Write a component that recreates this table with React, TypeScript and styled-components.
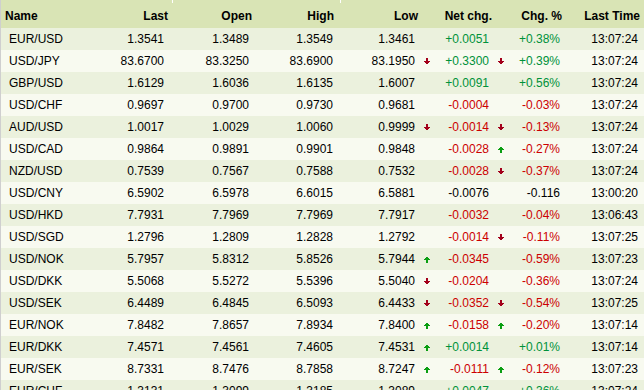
import React from "react";
import styled, { createGlobalStyle } from "styled-components";

const GlobalStyle = createGlobalStyle`
  html, body {
    margin: 0;
    padding: 0;
    background: #ffffff;
    overflow: hidden;
  }
  body {
    font-family: "Liberation Sans", Arial, sans-serif;
    font-size: 12px;
    color: #000000;
  }
`;

type Dir = "up" | "down" | null;
type Tone = "up" | "down" | "flat";

interface Quote {
  name: string;
  last: string;
  open: string;
  high: string;
  low: string;
  lowDir: Dir;
  net: string;
  netDir: Dir;
  pct: string;
  time: string;
}

const quotes: Quote[] = [
  { name: "EUR/USD", last: "1.3541", open: "1.3489", high: "1.3549", low: "1.3461", lowDir: null, net: "+0.0051", netDir: null, pct: "+0.38%", time: "13:07:24" },
  { name: "USD/JPY", last: "83.6700", open: "83.3250", high: "83.6900", low: "83.1950", lowDir: "down", net: "+0.3300", netDir: "down", pct: "+0.39%", time: "13:07:24" },
  { name: "GBP/USD", last: "1.6129", open: "1.6036", high: "1.6135", low: "1.6007", lowDir: null, net: "+0.0091", netDir: null, pct: "+0.56%", time: "13:07:24" },
  { name: "USD/CHF", last: "0.9697", open: "0.9700", high: "0.9730", low: "0.9681", lowDir: null, net: "-0.0004", netDir: null, pct: "-0.03%", time: "13:07:24" },
  { name: "AUD/USD", last: "1.0017", open: "1.0029", high: "1.0060", low: "0.9999", lowDir: "down", net: "-0.0014", netDir: "down", pct: "-0.13%", time: "13:07:24" },
  { name: "USD/CAD", last: "0.9864", open: "0.9891", high: "0.9901", low: "0.9848", lowDir: null, net: "-0.0028", netDir: "up", pct: "-0.27%", time: "13:07:24" },
  { name: "NZD/USD", last: "0.7539", open: "0.7567", high: "0.7588", low: "0.7532", lowDir: null, net: "-0.0028", netDir: "down", pct: "-0.37%", time: "13:07:24" },
  { name: "USD/CNY", last: "6.5902", open: "6.5978", high: "6.6015", low: "6.5881", lowDir: null, net: "-0.0076", netDir: null, pct: "-0.116", time: "13:00:20" },
  { name: "USD/HKD", last: "7.7931", open: "7.7969", high: "7.7969", low: "7.7917", lowDir: null, net: "-0.0032", netDir: null, pct: "-0.04%", time: "13:06:43" },
  { name: "USD/SGD", last: "1.2796", open: "1.2809", high: "1.2828", low: "1.2792", lowDir: null, net: "-0.0014", netDir: "down", pct: "-0.11%", time: "13:07:25" },
  { name: "USD/NOK", last: "5.7957", open: "5.8312", high: "5.8526", low: "5.7944", lowDir: "up", net: "-0.0345", netDir: null, pct: "-0.59%", time: "13:07:23" },
  { name: "USD/DKK", last: "5.5068", open: "5.5272", high: "5.5396", low: "5.5040", lowDir: "down", net: "-0.0204", netDir: null, pct: "-0.36%", time: "13:07:24" },
  { name: "USD/SEK", last: "6.4489", open: "6.4845", high: "6.5093", low: "6.4433", lowDir: "down", net: "-0.0352", netDir: "down", pct: "-0.54%", time: "13:07:25" },
  { name: "EUR/NOK", last: "7.8482", open: "7.8657", high: "7.8934", low: "7.8400", lowDir: "up", net: "-0.0158", netDir: "up", pct: "-0.20%", time: "13:07:14" },
  { name: "EUR/DKK", last: "7.4571", open: "7.4561", high: "7.4605", low: "7.4531", lowDir: "up", net: "+0.0014", netDir: null, pct: "+0.01%", time: "13:07:14" },
  { name: "EUR/SEK", last: "8.7331", open: "8.7476", high: "8.7858", low: "8.7247", lowDir: "up", net: "-0.0111", netDir: "up", pct: "-0.12%", time: "13:07:23" },
  { name: "EUR/CHF", last: "1.3131", open: "1.3099", high: "1.3185", low: "1.3089", lowDir: null, net: "+0.0047", netDir: null, pct: "+0.36%", time: "13:07:24" },
];

// the CNY row is quoted without a sign colour
const toneOf = (q: Quote, v: string): Tone => {
  if (q.name === "USD/CNY") return "flat";
  return v.startsWith("+") ? "up" : "down";
};

const toneColor: Record<Tone, string> = {
  up: "#00913a",
  down: "#cc0000",
  flat: "#000000",
};

const Table = styled.div`
  width: 644px;
  border-left: 1px solid #cfcfcf;
  box-sizing: border-box;
`;

const HeaderRow = styled.div`
  display: grid;
  grid-template-columns: 87px 84px 84px 84px 84px 83px 84px minmax(0, 1fr);
  height: 28px;
  background: #d9e4b5;
`;

const HeadCell = styled.div<{ $left?: boolean; $pad?: number }>`
  position: relative;
  display: flex;
  align-items: center;
  justify-content: ${(p) => (p.$left ? "flex-start" : "flex-end")};
  padding: 3px ${(p) => p.$pad ?? 4}px 0 ${(p) => (p.$left ? 4 : 0)}px;
  min-width: 0;
  font-weight: bold;
  font-size: 12px;
  white-space: nowrap;

  & + &::before {
    content: "";
    position: absolute;
    left: 0;
    top: 0;
    width: 1px;
    height: 3px;
    background: #ffffff;
  }
`;

const Row = styled.div<{ $odd: boolean }>`
  display: grid;
  grid-template-columns: 87px 84px 84px 84px 81px 12px 62px 12px 84px minmax(0, 1fr);
  height: 22px;
  background: ${(p) => (p.$odd ? "#ebf1dd" : "#f8faf0")};
`;

const Cell = styled.div<{ $left?: boolean; $pad?: number; $tone?: Tone }>`
  display: flex;
  align-items: center;
  justify-content: ${(p) => (p.$left ? "flex-start" : "flex-end")};
  padding: 0 ${(p) => p.$pad ?? 8}px 0 ${(p) => (p.$left ? 8 : 0)}px;
  min-width: 0;
  color: ${(p) => toneColor[p.$tone ?? "flat"]};
  white-space: nowrap;
`;

const ArrowSlot = styled.div`
  display: flex;
  align-items: center;
  justify-content: center;
`;

const Arrow: React.FC<{ dir: Dir }> = ({ dir }) => {
  if (!dir) return <ArrowSlot />;
  const color = dir === "up" ? "#0a9e12" : "#a3001b";
  return (
    <ArrowSlot>
      <svg width="6" height="7" viewBox="0 0 6 7" shapeRendering="crispEdges">
        {dir === "down" ? (
          <g fill={color}>
            <rect x="2" y="0" width="2" height="4" />
            <rect x="0" y="3" width="6" height="1" />
            <rect x="1" y="4" width="4" height="1" />
            <rect x="2" y="5" width="2" height="1" />
          </g>
        ) : (
          <g fill={color}>
            <rect x="2" y="1" width="2" height="1" />
            <rect x="1" y="2" width="4" height="1" />
            <rect x="0" y="3" width="6" height="1" />
            <rect x="2" y="3" width="2" height="4" />
          </g>
        )}
      </svg>
    </ArrowSlot>
  );
};

export default function App() {
  return (
    <>
      <GlobalStyle />
      <Table>
        <HeaderRow>
          <HeadCell $left>Name</HeadCell>
          <HeadCell>Last</HeadCell>
          <HeadCell>Open</HeadCell>
          <HeadCell $pad={6}>High</HeadCell>
          <HeadCell $pad={6}>Low</HeadCell>
          <HeadCell $pad={15}>Net chg.</HeadCell>
          <HeadCell $pad={29}>Chg. %</HeadCell>
          <HeadCell $pad={4}>Last Time</HeadCell>
        </HeaderRow>
        {quotes.map((q, i) => (
          <Row key={q.name} $odd={i % 2 === 0}>
            <Cell $left>{q.name}</Cell>
            <Cell>{q.last}</Cell>
            <Cell $pad={7}>{q.open}</Cell>
            <Cell $pad={7}>{q.high}</Cell>
            <Cell $pad={6}>{q.low}</Cell>
            <Arrow dir={q.lowDir} />
            <Cell $pad={6} $tone={toneOf(q, q.net)}>{q.net}</Cell>
            <Arrow dir={q.netDir} />
            <Cell $pad={31} $tone={toneOf(q, q.pct)}>{q.pct}</Cell>
            <Cell $pad={6}>{q.time}</Cell>
          </Row>
        ))}
      </Table>
    </>
  );
}
